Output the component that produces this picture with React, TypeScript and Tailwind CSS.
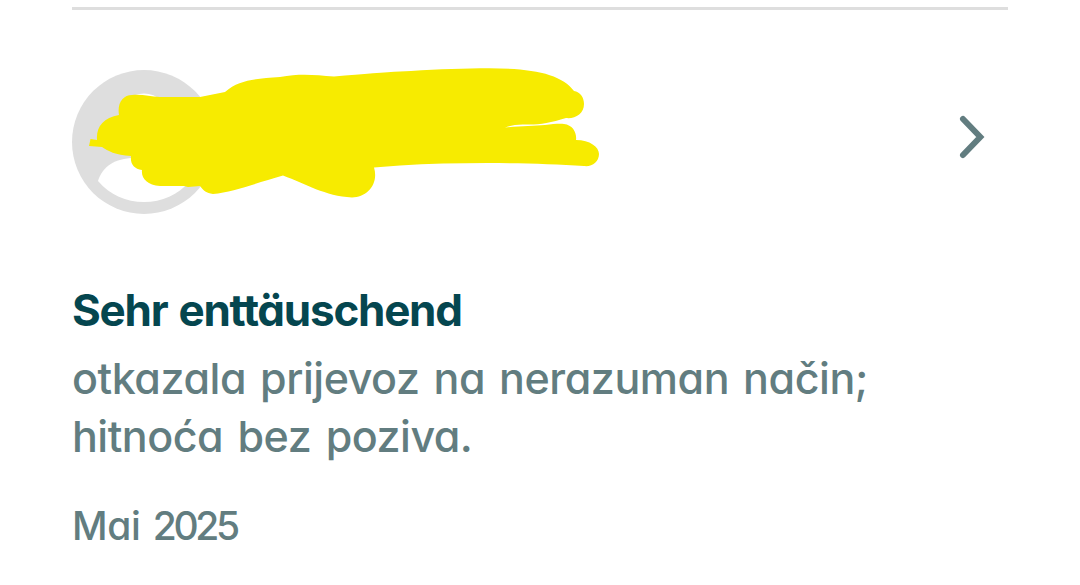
import { ReactNode } from "react";

function Avatar() {
  return (
    <svg className="block size-36" viewBox="0 0 144 144" aria-hidden="true">
      <circle cx="72" cy="72" r="72" fill="#dedede" />
      <circle cx="72" cy="48" r="24.5" fill="#fff" />
      <path d="M26 111C30 97 43 88 62 88H82C101 88 114 97 118 111C106 125 90 132 72 132S38 125 26 111Z" fill="#fff" />
    </svg>
  );
}

// Marker stroke that hides the reviewer's name
function Redaction() {
  return (
    <svg
      className="absolute -top-2.5 left-0 h-[150px] w-[540px]"
      viewBox="72 60 540 150"
      aria-hidden="true"
    >
      <path
        fill="#f7eb00"
        d="M89 146L90.5 139L97 140C96 127 103 118 119 115C117 103 123 95 132 95C143 94 150 97 160 97H200L225 92C240 79 256 79 280 77C301 73 315 75 334 76.5C365 74 385 72 400 71.5C430 70 455 68.5 480 68.3C530 67.5 561 73 574 91C580 92 584 97 584 104C584 114 575 119 566 118C550 123 538 125 526 124.5C518 124 510 125.5 505 127.5C520 126 534 126 545 125C553 124 560 123.5 564 124C573 125 577 133 576 140C590 140 599 147 599 154C599 162 592 167 584 166C530 162.5 460 162 400 165.5L374 167.5C379 184 367 197.5 352 197.5C325 196 306 184 283 175.5C256 183 234 192 213 194C206 193 204 191 200 186L188 187L184 186H160C147 185 141 178 142 170C134 169 130 164 131 156C115 155 108 151 102 147Z"
      />
    </svg>
  );
}

function Line({ className, children }: { className: string; children: ReactNode }) {
  return <span className={`block whitespace-nowrap ${className}`}>{children}</span>;
}

export default function App() {
  return (
    <main className="h-[585px] w-[1080px] overflow-hidden bg-white px-[72px] pt-[7px] font-['Inter',sans-serif] text-[#627d80] [font-feature-settings:'cv11']">
      <article className="border-t-[3px] border-[#dedede] pt-[60px]">
        <header className="relative flex h-36 items-center justify-between">
          <Avatar />
          <Redaction />
          <svg
            className="mr-[20px] mb-[10px] h-12 w-8"
            viewBox="0 0 32 48"
            fill="none"
            stroke="#627d80"
            strokeWidth="6"
            strokeLinecap="round"
            strokeLinejoin="miter"
            aria-hidden="true"
          >
            <path d="M7 6L24.3 24L7 42" />
          </svg>
        </header>

        <h2 className="mt-[67px] text-[44px] leading-[58px] font-[650] text-[#05464f]">
          <Line className="tracking-[-1.25px] [word-spacing:2px]">Sehr enttäuschend</Line>
        </h2>
        <p className="mt-[10px] text-[43px] leading-[58px] font-medium">
          <Line className="tracking-[-0.45px] [word-spacing:3px]">otkazala prijevoz na nerazuman način;</Line>
          <Line className="tracking-[-0.5px] [word-spacing:3.5px]">hitnoća bez poziva.</Line>
        </p>
        <p className="mt-[34px] text-[39px] leading-[54px] font-medium">
          <Line className="tracking-[-0.3px] [word-spacing:2px]">
            Mai <span className="tracking-[-3.3px]">2025</span>
          </Line>
        </p>
      </article>
    </main>
  );
}
